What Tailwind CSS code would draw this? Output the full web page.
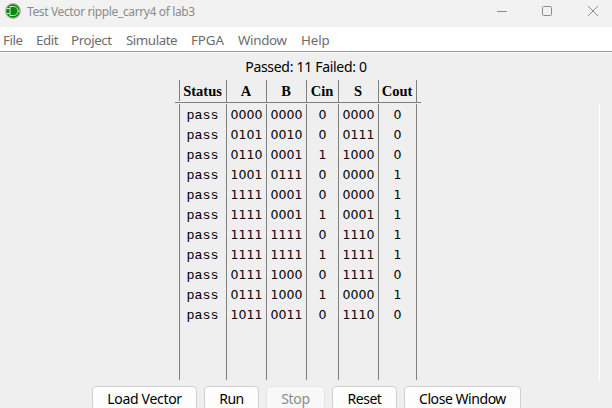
<!DOCTYPE html>
<html lang="en">
<head>
<meta charset="utf-8">
<title>Test Vector ripple_carry4 of lab3</title>
<script src="https://cdn.jsdelivr.net/npm/@tailwindcss/browser@4"></script>
</head>
<body class="w-[612px] h-[408px] overflow-hidden bg-[#efefef] font-['Noto_Sans',sans-serif] text-black">
<div class="flex flex-col h-[408px] whitespace-nowrap overflow-hidden">
  <header class="flex h-[27px] shrink-0 bg-[#f2f2f2] text-[#8b8b8b]">
    <svg class="ml-[5px] mt-[3px] size-4 shrink-0" viewBox="0 0 16 16" fill="none">
      <circle cx="8" cy="8" r="7.3" fill="#078a07" stroke="#a9b59b" stroke-width="1.2"/>
      <path d="M5 3.5h3.5a4.5 4.5 0 0 1 0 9H5zM2 5.5H5M2 10.5H5M13 8H15" stroke="#d5e8cd" stroke-width="1"/>
    </svg>
    <span class="ml-[6px] w-[470px] text-[12px] leading-[24px] tracking-[-0.37px]">Test Vector ripple_carry4 of lab3</span>
    <svg class="h-[27px] w-[115px] shrink-0" viewBox="497 0 115 27" fill="none" stroke="#8b8b8b">
      <path d="M497 11.5h10M588 6l10 10M598 6l-10 10"/>
      <rect x="542.5" y="6.5" width="9" height="9" rx="1"/>
    </svg>
  </header>
  <nav class="flex h-[26px] shrink-0 border-b border-white bg-white text-[#6d6d6d] text-[13.33px] leading-[26px] pl-[3px] shadow-[inset_0_-1px_0_#999]">
    <span class="w-[33px] tracking-[-0.4px]">File</span>
    <span class="w-[35px] tracking-[-0.4px]">Edit</span>
    <span class="w-[55px] tracking-[-0.4px]">Project</span>
    <span class="w-[65px] tracking-[-0.45px]">Simulate</span>
    <span class="w-[47px] tracking-[-0.1px]">FPGA</span>
    <span class="w-[63px] tracking-[-0.3px]">Window</span>
    <span class="tracking-[-0.1px]">Help</span>
  </nav>
  <main class="flex flex-col items-center h-[327px] shrink-0">
    <p class="h-[27px] text-[14px] leading-[27px] tracking-[-0.3px]">Passed: 11 Failed: 0</p>
    <div class="w-full pl-[175px]">
      <div class="w-[246px] h-[23px] px-1 border-b border-[#808080]">
        <div id="head" class="grid grid-cols-[47px_40px_40px_32px_40px_38px] w-[238px] h-[21px] border-l border-[#808080] font-['Liberation_Serif',serif] font-bold text-[14.5px] leading-[23px] text-center"></div>
      </div>
    </div>
    <div class="mt-px flex w-full h-[276px] pl-[179px]">
      <div id="rows" class="grid grid-cols-[47px_40px_40px_32px_40px_38px] w-[238px] border-l border-[#808080] leading-5 text-center"></div>
      <div class="ml-[182px] w-px bg-white"></div>
    </div>
  </main>
  <footer class="flex h-[28px] shrink-0 gap-[7px] pt-[6px] pl-[92px] text-[14px] leading-[22px] text-center">
    <button class="h-[25px] w-[105px] shrink-0 rounded-[4px] border border-[#d0d0d0] bg-[#fdfdfd] tracking-[-0.3px]">Load Vector</button>
    <button class="h-[25px] w-[55px] shrink-0 rounded-[4px] border border-[#d0d0d0] bg-[#fdfdfd] tracking-[-0.5px]">Run</button>
    <button class="h-[25px] w-[59px] shrink-0 rounded-[4px] border border-[#e5e5e5] bg-[#f8f8f8] text-[#8c8c8c] tracking-[-0.3px]">Stop</button>
    <button class="h-[25px] w-[65px] shrink-0 rounded-[4px] border border-[#d0d0d0] bg-[#fdfdfd] tracking-[-0.5px]">Reset</button>
    <button class="h-[25px] w-[117px] shrink-0 rounded-[4px] border border-[#d0d0d0] bg-[#fdfdfd] tracking-[-0.45px]">Close Window</button>
  </footer>
</div>
<script>
const vectors = [
  'pass 0000 0000 0 0000 0','pass 0101 0010 0 0111 0','pass 0110 0001 1 1000 0',
  'pass 1001 0111 0 0000 1','pass 1111 0001 0 0000 1','pass 1111 0001 1 0001 1',
  'pass 1111 1111 0 1110 1','pass 1111 1111 1 1111 1','pass 0111 1000 0 1111 0',
  'pass 0111 1000 1 0000 1','pass 1011 0011 0 1110 0'].map(r => r.split(' '));
document.getElementById('head').innerHTML = ['Status','A','B','Cin','S','Cout']
  .map(t => `<div class="border-r border-[#808080] pr-px">${t}</div>`).join('');
// The status words are set in a slab monospace, the bits in plain undotted figures
const statusFont = "font-['Liberation_Mono',monospace] text-[13.33px] pt-[2px] pr-px";
const bitFont = "font-['DejaVu_Sans',sans-serif] text-[12.5px] pt-[1px]";
document.getElementById('rows').innerHTML = [0,1,2,3,4,5].map(c =>
  `<div class="border-r border-[#808080] ${c ? bitFont : statusFont}">${vectors.map(v => `<div>${v[c]}</div>`).join('')}</div>`).join('');
</script>
</body>
</html>
